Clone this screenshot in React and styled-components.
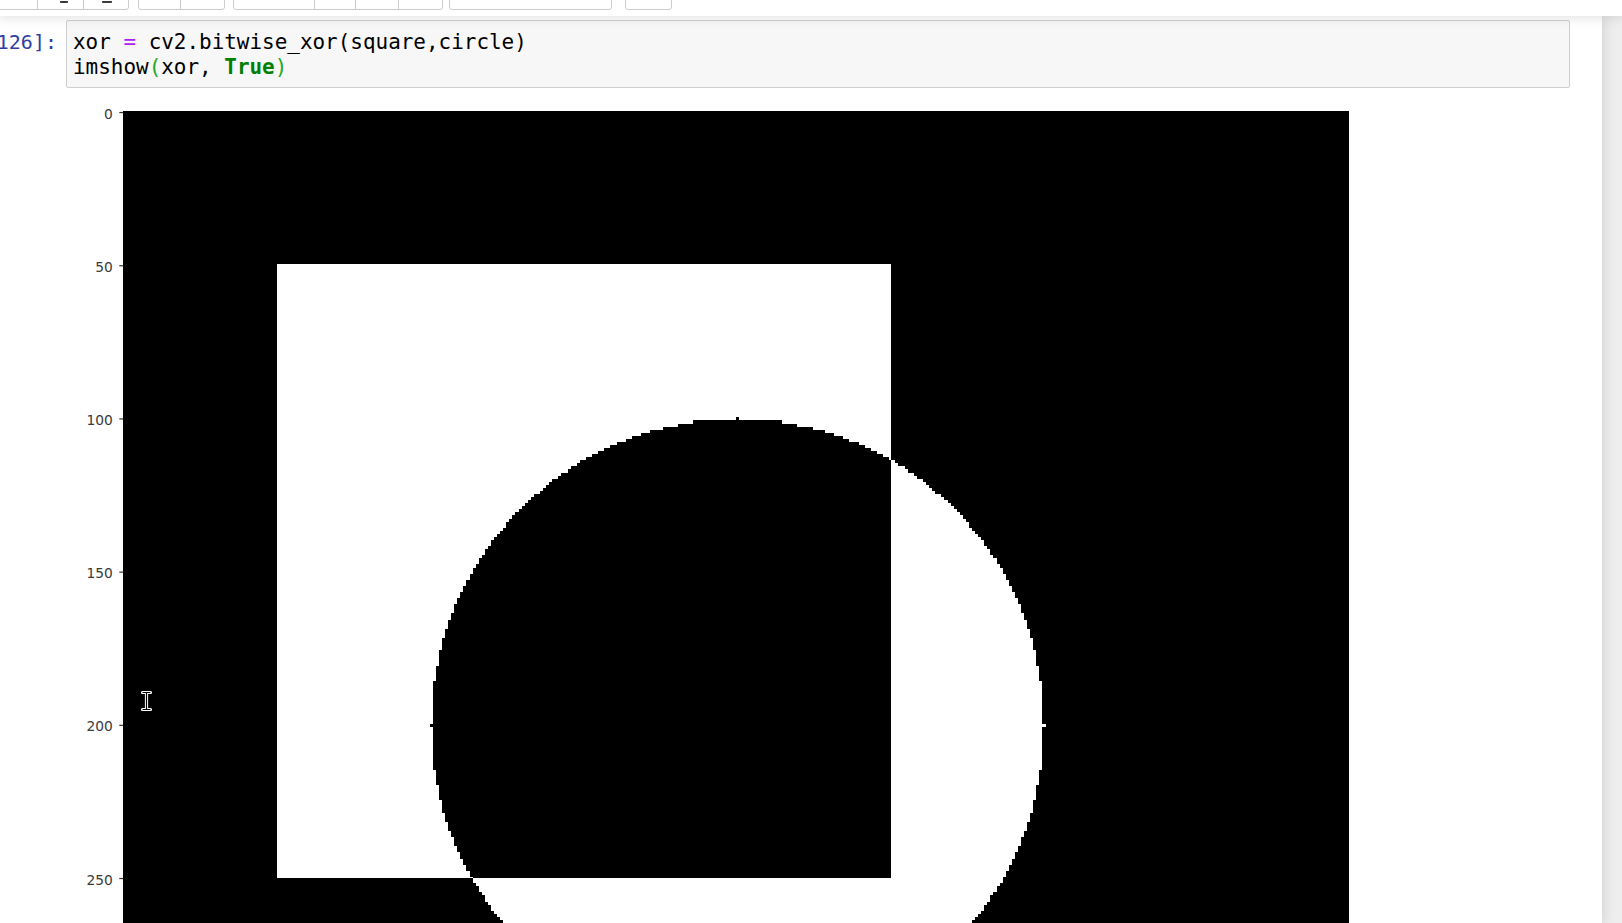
import React from 'react';
import styled, { createGlobalStyle } from 'styled-components';

const Global = createGlobalStyle`
  html, body { margin: 0; padding: 0; overflow: hidden; }
  body {
    width: 1622px;
    height: 923px;
    background: #eeeeee;
    font-family: "DejaVu Sans", "Liberation Sans", sans-serif;
  }
  #root { height: 100%; }
`;

const Page = styled.div`
  display: flex;
  flex-direction: column;
  height: 923px;
  overflow: hidden;
`;

const Header = styled.header`
  position: relative;
  z-index: 2;
  flex: none;
  height: 16px;
  background: #ffffff;
  box-shadow: 0 0 12px 1px rgba(87, 87, 87, 0.2);
  overflow: hidden;
`;

const Toolbar = styled.div`
  display: flex;
  align-items: flex-start;
  margin-top: -26px;
  margin-left: -7px;
`;

const Group = styled.div`
  display: flex;
  margin-right: ${p => p.$gap || 0}px;
  border: 1px solid #cccccc;
  border-radius: 3px;
  background: #ffffff;
`;

const Btn = styled.div`
  box-sizing: border-box;
  width: ${p => p.$w}px;
  height: 34px;
  display: flex;
  align-items: flex-end;
  padding-bottom: 6px;
  padding-left: ${p => p.$ix || 0}px;
  & + & { border-left: 1px solid #cccccc; }
`;

const IconBit = styled.span`
  display: block;
  width: ${p => p.$w}px;
  height: 2px;
  background: #3a3a3a;
  border-radius: 0 0 1px 1px;
`;

const Site = styled.div`
  flex: 1;
  display: flex;
  min-height: 0;
`;

const Container = styled.main`
  margin-left: -120px;
  width: 1722px;
  flex: none;
  background: #ffffff;
  box-shadow: 0 0 12px 1px rgba(87, 87, 87, 0.2);
  padding-top: 4px;
`;

const Cell = styled.div`
  display: flex;
  flex-direction: column;
  padding-right: 32px;
`;

const Row = styled.div`
  display: flex;
  align-items: flex-start;
`;

const Prompt = styled.div`
  flex: none;
  box-sizing: border-box;
  width: 186px;
  padding: 10px 9px 0 0;
  text-align: right;
  font-family: "DejaVu Sans Mono", "Liberation Mono", monospace;
  font-size: 20px;
  line-height: 24.6px;
  color: #303f9f;
  white-space: pre;
`;

const InputArea = styled.div`
  flex: 1;
  box-sizing: border-box;
  height: 68px;
  border: 1px solid #cfcfcf;
  border-radius: 2px;
  background: #f7f7f7;
  padding: 9px 6px 7px 6px;
`;

const CodeLine = styled.div`
  font-family: "DejaVu Sans Mono", "Liberation Mono", monospace;
  font-size: 20.95px;
  line-height: 24.6px;
  color: #000000;
  white-space: pre;
`;

const Tok = styled.span`
  color: ${p => p.$c};
  font-weight: ${p => (p.$b ? 700 : 400)};
`;

const Output = styled.div`
  flex: 1;
`;

const S = 3.064;
const IX = 57.3;
const IY = 23;

function circlePath() {
  const pts = [];
  const rows = [];
  for (let j = 100; j <= 299; j++) {
    const d = 10000 - (j - 200) * (j - 200);
    if (d < 0) continue;
    const half = Math.floor(Math.sqrt(d));
    rows.push([j, 200 - half, 200 + half + 1]);
  }
  rows.forEach(([j, , r]) => { pts.push([r, j], [r, j + 1]); });
  for (let k = rows.length - 1; k >= 0; k--) {
    const [j, l] = rows[k];
    pts.push([l, j + 1], [l, j]);
  }
  return 'M' + pts.map(p => p[0] + ' ' + p[1]).join(' L') + ' Z';
}

const XOR_PATH = 'M50 50 H250.7 V250.4 H50 Z ' + circlePath();
const TICKS = [0, 50, 100, 150, 200, 250];

function Figure() {
  return (
    <svg width="1300" height="840" viewBox="0 0 1300 840" style={{ display: 'block' }}>
      <g transform={`translate(${IX} ${IY}) scale(${S})`} shapeRendering="crispEdges">
        <rect x="0" y="0" width="400" height="300" fill="#000" />
        <path d={XOR_PATH} fill="#fff" fillRule="evenodd" />
      </g>
      {TICKS.map(v => {
        const y = IY + (v + 0.5) * S;
        return (
          <g key={v}>
            <line x1={IX - 4} x2={IX} y1={y} y2={y} stroke="#333" strokeWidth="1.2" />
            <text
              x={IX - 10.5}
              y={y + 6}
              textAnchor="end"
              fontFamily='"DejaVu Sans", sans-serif'
              fontSize="13.8"
              fill="#3a3a3a"
            >
              {v}
            </text>
          </g>
        );
      })}
      <path
        d="M76.5 604.5 h8 M80.5 604.5 v17 M76.5 621.5 h8"
        stroke="#fff"
        strokeWidth="3.2"
        strokeLinecap="round"
        fill="none"
      />
      <path
        d="M77 604.5 h7 M80.5 604.5 v17 M77 621.5 h7"
        stroke="#000"
        strokeWidth="1.2"
        strokeLinecap="round"
        fill="none"
      />
    </svg>
  );
}

export default function App() {
  return (
    <Page>
      <Global />
      <Header>
        <Toolbar>
          <Group $gap={9}>
            <Btn $w={43} />
            <Btn $w={46} $ix={22}><IconBit $w={8} /></Btn>
            <Btn $w={45} $ix={18}><IconBit $w={10} /></Btn>
          </Group>
          <Group $gap={8}>
            <Btn $w={41} />
            <Btn $w={44} />
          </Group>
          <Group $gap={6}>
            <Btn $w={80} />
            <Btn $w={41} />
            <Btn $w={43} />
            <Btn $w={44} />
          </Group>
          <Group $gap={13}>
            <Btn $w={161} />
          </Group>
          <Group>
            <Btn $w={45} />
          </Group>
        </Toolbar>
      </Header>
      <Site>
        <Container>
          <Cell>
            <Row>
              <Prompt>In [126]:</Prompt>
              <InputArea>
                <CodeLine>
                  xor <Tok $c="#aa22ff">=</Tok> cv2.bitwise_xor(square,circle)
                </CodeLine>
                <CodeLine>
                  imshow<Tok $c="#22aa22">(</Tok>xor, <Tok $c="#008000" $b>True</Tok><Tok $c="#22aa22">)</Tok>
                </CodeLine>
              </InputArea>
            </Row>
            <Row>
              <Prompt aria-hidden="true" />
              <Output>
                <Figure />
              </Output>
            </Row>
          </Cell>
        </Container>
      </Site>
    </Page>
  );
}
